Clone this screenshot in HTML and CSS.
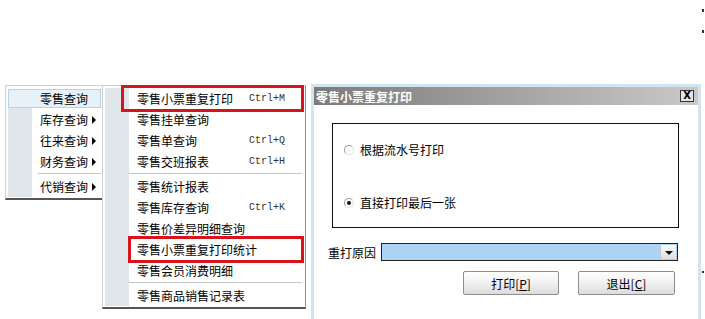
FILE: index.html
```html
<!DOCTYPE html>
<html lang="zh-CN">
<head>
    <meta charset="UTF-8">
    <title>零售小票重复打印</title>
    <link rel="stylesheet" href="styles.css">
</head>
<body>

    <div class="stage">

        <!-- 主菜单 -->
        <div class="menu menu-main">
            <div class="menu-list">
                <div class="item hover">零售查询</div>
                <div class="item">库存查询<span class="arrow"></span></div>
                <div class="item">往来查询<span class="arrow"></span></div>
                <div class="item">财务查询<span class="arrow"></span></div>
                <div class="sep"></div>
                <div class="item">代销查询<span class="arrow"></span></div>
            </div>
        </div>

        <!-- 零售查询子菜单 -->
        <div class="menu menu-sub">
            <div class="menu-list">
                <div class="item mark mark-first"><span class="label">零售小票重复打印</span><span class="key">Ctrl+M</span></div>
                <div class="item"><span class="label">零售挂单查询</span></div>
                <div class="item"><span class="label">零售单查询</span><span class="key">Ctrl+Q</span></div>
                <div class="item"><span class="label">零售交班报表</span><span class="key">Ctrl+H</span></div>
                <div class="sep"></div>
                <div class="item"><span class="label">零售统计报表</span></div>
                <div class="item"><span class="label">零售库存查询</span><span class="key">Ctrl+K</span></div>
                <div class="item"><span class="label">零售价差异明细查询</span></div>
                <div class="item mark mark-second"><span class="label">零售小票重复打印统计</span></div>
                <div class="item"><span class="label">零售会员消费明细</span></div>
                <div class="sep"></div>
                <div class="item"><span class="label">零售商品销售记录表</span></div>
            </div>
        </div>

        <!-- 对话框 -->
        <div class="dialog">
            <div class="titlebar">
                <span class="title">零售小票重复打印</span>
                <span class="close">X</span>
            </div>
            <div class="dialog-body">
                <div class="groupbox">
                    <label class="radio radio-first"><span class="dot"></span>根据流水号打印</label>
                    <label class="radio radio-second"><span class="dot checked"></span>直接打印最后一张</label>
                </div>
                <div class="reason">
                    <span class="reason-label">重打原因</span>
                    <div class="combo"><span class="combo-btn"></span></div>
                </div>
                <div class="buttons">
                    <button class="btn btn-print">打印[<u>P</u>]</button>
                    <button class="btn btn-exit">退出[<u>C</u>]</button>
                </div>
            </div>
        </div>

    </div>

    <span class="tick tick-a"></span>
    <span class="tick tick-b"></span>
    <span class="tick tick-c"></span>

</body>
</html>
```

FILE: styles.css
```css
body {
    margin: 0;
    background: #fff;
    font-family: "Noto Sans CJK SC", "DejaVu Sans", sans-serif;
    font-size: 12px;
    color: #000;
}
.stage {
    display: flex;
    align-items: flex-start;
    padding: 85px 0 0 5px;
}

/* 菜单 */
.menu {
    box-sizing: border-box;
    background: #fff;
    border: 1px solid #cfcfcf;
    border-right-color: #8c8c8c;
    border-bottom: 2px solid #555;
    padding: 2px 2px 1px 2px;
}
.menu-list {
    background: linear-gradient(to right, #dfe6ec 24px, #fff 24px);
}
.menu-main {
    width: 100px;
    position: relative;
    z-index: 1;
}
.menu-sub {
    width: 204px;
    margin-left: -3px;
    position: relative;
    z-index: 2;
}
.item {
    position: relative;
    height: 21px;
    display: flex;
    align-items: center;
    padding-left: 32px;
    white-space: nowrap;
}
.item.hover {
    background: #e7f1fa;
    box-shadow: inset 0 0 0 1px #b3d3ec;
    height: 19px;
    margin: 1px 1px 1px 0;
}
.arrow {
    position: absolute;
    right: 6px;
    top: 7px;
    width: 0;
    height: 0;
    border-left: 4px solid #000;
    border-top: 4px solid transparent;
    border-bottom: 4px solid transparent;
}
.sep {
    height: 1px;
    margin: 1px 1px 1px 30px;
    background: #c6c6c6;
    border-bottom: 1px solid #fff;
}
.menu-sub .sep {
    margin-left: 23px;
}
.label {
    flex: 0 0 112px;
}
.key {
    font-family: "Liberation Mono", monospace;
    font-size: 10px;
    color: #333;
}
.mark::after {
    content: "";
    position: absolute;
    top: -3px;
    bottom: -3px;
    right: -1px;
    border: 3px solid #d9131b;
}
.mark-first::after {
    left: 16px;
}
.mark-second::after {
    left: 23px;
}

/* 对话框 */
.dialog {
    box-sizing: border-box;
    width: 390px;
    margin: -1px 0 0 5px;
    border: 3px solid #d3e4f1;
    background: #fff;
}
.titlebar {
    height: 18px;
    display: flex;
    align-items: center;
    justify-content: space-between;
    background: linear-gradient(to right, #7b7b7b, #c9c9c9);
    padding: 0 4px 0 2px;
}
.title {
    color: #fff;
    font-weight: bold;
}
.close {
    box-sizing: border-box;
    width: 14px;
    height: 12px;
    border: 1px solid #333;
    background: #e4e4e4;
    font-family: "DejaVu Sans", sans-serif;
    font-size: 10px;
    font-weight: bold;
    line-height: 10px;
    text-align: center;
}
.dialog-body {
    height: 202px;
    padding: 18px 19px 0 18px;
}
.groupbox {
    position: relative;
    height: 105px;
    box-sizing: border-box;
    border: 1px solid #111;
}
.radio {
    display: flex;
    align-items: center;
    gap: 6px;
    position: absolute;
    left: 11px;
}
.radio-first {
    top: 17px;
}
.radio-second {
    top: 70px;
}
.dot {
    box-sizing: border-box;
    width: 10px;
    height: 10px;
    border-radius: 50%;
    border: 1px solid #9a9a9a;
    border-bottom-color: #e0e0e0;
    border-right-color: #e0e0e0;
    background: #fff;
    position: relative;
}
.dot.checked::after {
    content: "";
    position: absolute;
    left: 2px;
    top: 2px;
    width: 4px;
    height: 4px;
    border-radius: 50%;
    background: #111;
}
.reason {
    display: flex;
    align-items: center;
    margin: 15px 0 0 -4px;
}
.reason-label {
    width: 53px;
}
.combo {
    box-sizing: border-box;
    width: 297px;
    height: 18px;
    border: 1px solid #222;
    background: #acd2f5;
    position: relative;
}
.combo-btn {
    position: absolute;
    right: 1px;
    top: 1px;
    bottom: 1px;
    width: 15px;
    background: linear-gradient(#fafafa, #dedede);
    border-left: 1px solid #c8c8c8;
}
.combo-btn::after {
    content: "";
    position: absolute;
    left: 4px;
    top: 6px;
    border-top: 4px solid #111;
    border-left: 4px solid transparent;
    border-right: 4px solid transparent;
}
.buttons {
    display: flex;
    gap: 19px;
    margin: 10px 0 0 131px;
}
.btn {
    box-sizing: border-box;
    height: 24px;
    font-family: "Noto Sans CJK SC", sans-serif;
    font-size: 12px;
    color: #000;
    border: 1px solid #8e8e8e;
    border-radius: 2px;
    background: linear-gradient(#ffffff, #f2f2f2 45%, #dcdcdc);
    padding: 0;
}
.btn-print {
    width: 96px;
}
.btn-exit {
    width: 97px;
}

.tick {
    position: absolute;
    width: 2px;
    height: 3px;
    background: #333;
    left: 702px;
}
.tick-a { top: 9px; }
.tick-b { top: 30px; }
.tick-c { top: 271px; height: 2px; }
```
